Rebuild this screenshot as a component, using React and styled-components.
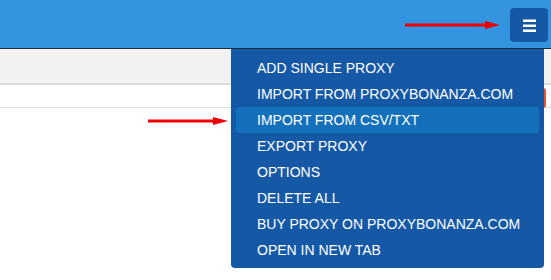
import React from 'react';
import styled, { createGlobalStyle } from 'styled-components';

const GlobalStyle = createGlobalStyle`
  html, body {
    margin: 0;
    padding: 0;
    background: #ffffff;
    font-family: "Liberation Sans", Arial, sans-serif;
  }
`;

const Page = styled.div`
  position: relative;
  width: 551px;
  height: 280px;
  overflow: hidden;
  background: #ffffff;
`;

const Header = styled.header`
  position: relative;
  height: 40px;
  background: #3394df;
  border-bottom: 1px solid #1b2838;
  display: flex;
  justify-content: flex-end;
  align-items: flex-start;
  padding: 8px 3px 0 0;
`;

const MenuButton = styled.button`
  width: 38px;
  height: 34px;
  border: 0;
  border-radius: 4px;
  background: #1559a6;
  display: flex;
  align-items: center;
  justify-content: center;
  padding: 0;
  cursor: pointer;
`;

const Toolbar = styled.div`
  height: 34px;
  background: #f2f2f2;
  border-bottom: 2px solid #dcdcdc;
`;

const Row = styled.div`
  height: 19px;
  background: #ffffff;
  border-bottom: 1px solid #dddddd;
  display: flex;
  justify-content: flex-end;
  padding-top: 3px;
`;

const RedButton = styled.span`
  width: 20px;
  height: 16px;
  border: 2px solid #e8532f;
  border-radius: 3px;
  margin-right: 5px;
`;

const Dropdown = styled.ul`
  position: absolute;
  top: calc(100% + 1px);
  right: 7px;
  width: 313px;
  margin: 0;
  padding: 6px 5px 5px;
  box-sizing: border-box;
  list-style: none;
  background: #1559a6;
  border-radius: 0 0 4px 4px;
  z-index: 5;
`;

const Item = styled.li`
  height: 26px;
  line-height: 26px;
  padding-left: 21px;
  border-radius: 3px;
  color: #ffffff;
  font-size: 14px;
  text-transform: uppercase;
  white-space: nowrap;
  background: ${(p) => (p.$active ? '#1470bb' : 'transparent')};
`;

const Arrow = styled.svg`
  position: absolute;
  z-index: 10;
  left: ${(p) => p.$x}px;
  top: ${(p) => p.$y}px;
`;

const items = [
  'Add single proxy',
  'Import from proxybonanza.com',
  'Import from CSV/TXT',
  'Export proxy',
  'Options',
  'Delete all',
  'Buy proxy on proxybonanza.com',
  'Open in new tab',
];

const RedArrow = ({ x, y, length }) => (
  <Arrow $x={x} $y={y - 5} width={length} height="10" viewBox={`0 0 ${length} 10`}>
    <line x1="0" y1="5" x2={length - 12} y2="5" stroke="#f00000" strokeWidth="3" />
    <polygon points={`${length - 15},1 ${length},5 ${length - 15},9`} fill="#f00000" />
  </Arrow>
);

const App = () => (
  <>
    <GlobalStyle />
    <Page>
      <Header>
        <MenuButton aria-label="menu">
          <svg width="13" height="13" viewBox="0 0 13 13">
            <rect x="0" y="0.5" width="13" height="2.5" fill="#fff" />
            <rect x="0" y="5.5" width="13" height="2.5" fill="#fff" />
            <rect x="0" y="10.5" width="13" height="2.5" fill="#fff" />
          </svg>
        </MenuButton>
        <Dropdown>
          {items.map((label, i) => (
            <Item key={label} $active={i === 2}>{label}</Item>
          ))}
        </Dropdown>
      </Header>
      <Toolbar />
      <Row>
        <RedButton />
      </Row>
      <RedArrow x={405} y={25} length={95} />
      <RedArrow x={148} y={121} length={80} />
    </Page>
  </>
);

export default App;
